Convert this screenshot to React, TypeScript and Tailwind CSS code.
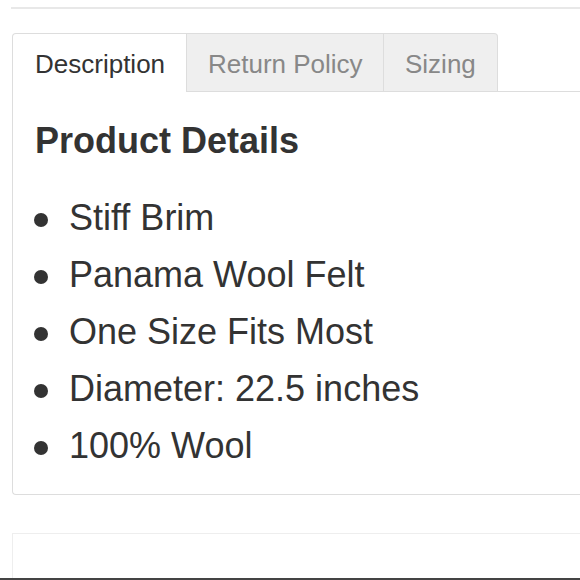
const items = ["Stiff Brim", "Panama Wool Felt", "One Size Fits Most", "Diameter: 22.5 inches", "100% Wool"];

export default function App() {
  return (
    <div className="h-[580px] w-[580px] overflow-hidden bg-white font-['Liberation_Sans',Arial,sans-serif] text-[#333]">
      <div className="ml-[11px] mt-[7px] h-[2px] bg-[#e8e8e8]" />

      <div className="ml-[12px] mt-[24px] w-[620px]">
        <div className="flex h-[59px]">
          <div className="flex w-[175px] items-center rounded-tl-[4px] border-l border-r border-t border-[#ddd] bg-white pl-[22px] pt-[2px] text-[26px] leading-none">
            Description
          </div>
          <div className="flex w-[197px] items-center border-b border-r border-t border-[#ddd] bg-[#efefef] pl-[21px] pt-[2px] text-[26px] leading-none text-[#888]">
            Return Policy
          </div>
          <div className="flex w-[114px] items-center rounded-tr-[4px] border-b border-r border-t border-[#ddd] bg-[#efefef] pl-[21px] pt-[2px] text-[26px] leading-none text-[#888]">
            Sizing
          </div>
          <div className="flex-1 border-b border-[#ddd]" />
        </div>

        <div className="h-[403px] rounded-bl-[4px] border-b border-l border-[#ddd] pl-[22px] pt-[27px]">
          <h2 className="text-[36px] font-bold leading-[43px]">Product Details</h2>
          <ul className="mt-[27px]">
            {items.map((item) => (
              <li key={item} className="flex items-center text-[36px] leading-[57px]">
                <span className="ml-[-1px] mr-[21px] mt-[4px] h-[14px] w-[14px] shrink-0 rounded-full bg-[#333]" />
                {item}
              </li>
            ))}
          </ul>
        </div>
      </div>

      <div className="ml-[12px] mt-[38px] h-[45px] border-l border-t border-[#eee]" />
      <div className="h-[2px] bg-[#444]" />
    </div>
  );
}
